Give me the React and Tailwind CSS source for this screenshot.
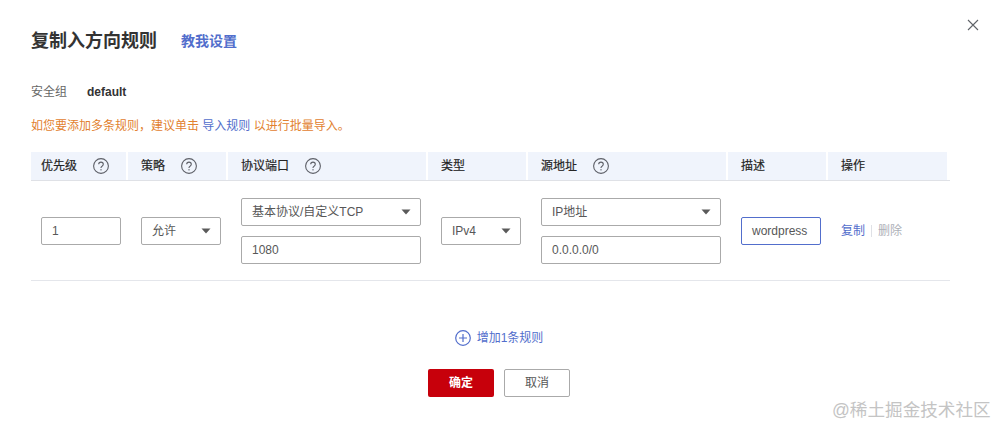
const Help = () => (
  <svg width="16" height="16" viewBox="0 0 16 16" fill="none" className="shrink-0">
    <circle cx="8" cy="8" r="7.4" stroke="#5e6068" strokeWidth="1.1" />
    <path d="M5.7 6.3c0-1.3 1-2.2 2.3-2.2s2.3.9 2.3 2.1c0 1-.6 1.5-1.3 2-.6.4-1 .8-1 1.6v.3" stroke="#5e6068" strokeWidth="1.1" />
    <rect x="7.4" y="11.2" width="1.2" height="1.2" fill="#5e6068" />
  </svg>
)

const Caret = () => (
  <svg width="10" height="6" viewBox="0 0 10 6" className="shrink-0">
    <path d="M0.5 0.5h9L5 5.5z" fill="#5a5a5a" />
  </svg>
)

const Field = ({ children, className = "", border = "border-[#aaaaaa]" }) => (
  <div className={`flex items-center h-7 px-[10px] border ${border} rounded-[2px] bg-white text-[#575757] ${className}`}>
    {children}
  </div>
)

const Select = ({ value, className = "" }) => (
  <Field className={`justify-between pr-[9px] ${className}`}>
    <span>{value}</span>
    <Caret />
  </Field>
)

const columns = [
  { label: "优先级", width: "w-[97px] pl-[10px]", help: true },
  { label: "策略", width: "w-[100px] pl-[13px]", help: true },
  { label: "协议端口", width: "w-[200px] pl-[13px]", help: true },
  { label: "类型", width: "w-[100px] pl-[13px]" },
  { label: "源地址", width: "w-[200px] pl-[13px]", help: true },
  { label: "描述", width: "w-[100px] pl-[13px]" },
  { label: "操作", width: "w-[121px] pl-[13px]" },
]

export default function App() {
  return (
    <div className="relative w-[998px] h-[426px] overflow-hidden bg-white pl-[31px] text-xs text-[#252b3a] font-['Liberation_Sans','Noto_Sans_CJK_SC',sans-serif]">
      <button className="absolute left-[967px] top-[19px] text-[#5f6368]">
        <svg width="12" height="12" viewBox="0 0 12 12" fill="none" stroke="currentColor" strokeWidth="1.1">
          <path d="M1 1l10 10M11 1L1 11" />
        </svg>
      </button>

      <div className="flex items-center pt-[29px] h-[52px]">
        <h1 className="text-lg leading-6 font-bold text-[#333]">复制入方向规则</h1>
        <a className="ml-6 text-sm leading-6 font-bold text-[#526ecc]">教我设置</a>
      </div>

      <div className="flex items-center mt-[31px] h-[18px]">
        <span className="w-[56px] text-[#666]">安全组</span>
        <span className="font-bold text-[#333]">default</span>
      </div>

      <p className="mt-4 h-[18px] leading-[18px] text-[#e2812f]">
        如您要添加多条规则，建议单击 <a className="text-[#526ecc]">导入规则</a> 以进行批量导入。
      </p>

      <div className="mt-[17px] w-[919px] h-[29px] flex border-b border-[#dfe1e6]">
        {columns.map((col) => (
          <div key={col.label} className={`${col.width} shrink-0 h-[28px] flex items-center gap-4 bg-[#f0f4fc] border-r-2 border-white text-[#252525]`}>
            <span className="[-webkit-text-stroke:0.2px_#252525]">{col.label}</span>
            {col.help && <Help />}
          </div>
        ))}
      </div>

      <div className="w-[919px] h-[100px] flex items-center border-b border-[#e4e6eb]">
        <div className="w-[96px] pl-[10px]">
          <Field className="w-[80px]">1</Field>
        </div>
        <div className="w-[100px] pl-[14px]">
          <Select value="允许" className="w-[80px]" />
        </div>
        <div className="w-[200px] pl-[14px] flex flex-col gap-[10px]">
          <Select value="基本协议/自定义TCP" className="w-[180px]" />
          <Field className="w-[180px]">1080</Field>
        </div>
        <div className="w-[100px] pl-[14px]">
          <Select value="IPv4" className="w-[80px]" />
        </div>
        <div className="w-[200px] pl-[14px] flex flex-col gap-[10px]">
          <Select value="IP地址" className="w-[180px]" />
          <Field className="w-[180px]">0.0.0.0/0</Field>
        </div>
        <div className="w-[100px] pl-[14px]">
          <Field className="w-[80px]" border="border-[#526ecc]">wordpress</Field>
        </div>
        <div className="flex items-center pl-[14px]">
          <a className="text-[#526ecc]">复制</a>
          <span className="mx-[6px] w-px h-3 bg-[#dfe1e6]" />
          <a className="text-[#adb0b8]">删除</a>
        </div>
      </div>

      <div className="w-[936px] flex justify-center items-center gap-[6px] mt-[48px] h-[18px] text-[#526ecc]">
        <svg width="16" height="16" viewBox="0 0 16 16" fill="none" stroke="#526ecc" strokeWidth="1.2">
          <circle cx="8" cy="8" r="7.3" />
          <path d="M4 8h8M8 4v8" />
        </svg>
        <span>增加1条规则</span>
      </div>

      <div className="w-[936px] flex justify-center gap-[10px] mt-[22px]">
        <button className="w-[66px] h-7 rounded-[2px] bg-[#c7000b] text-white font-bold">确定</button>
        <button className="w-[66px] h-7 rounded-[2px] bg-white border border-[#aaaaaa] text-[#575757]">取消</button>
      </div>

      <div className="absolute left-[832px] top-[398px] text-[17.6px] leading-6 text-[#c4c4c4] whitespace-nowrap">@稀土掘金技术社区</div>
    </div>
  )
}
